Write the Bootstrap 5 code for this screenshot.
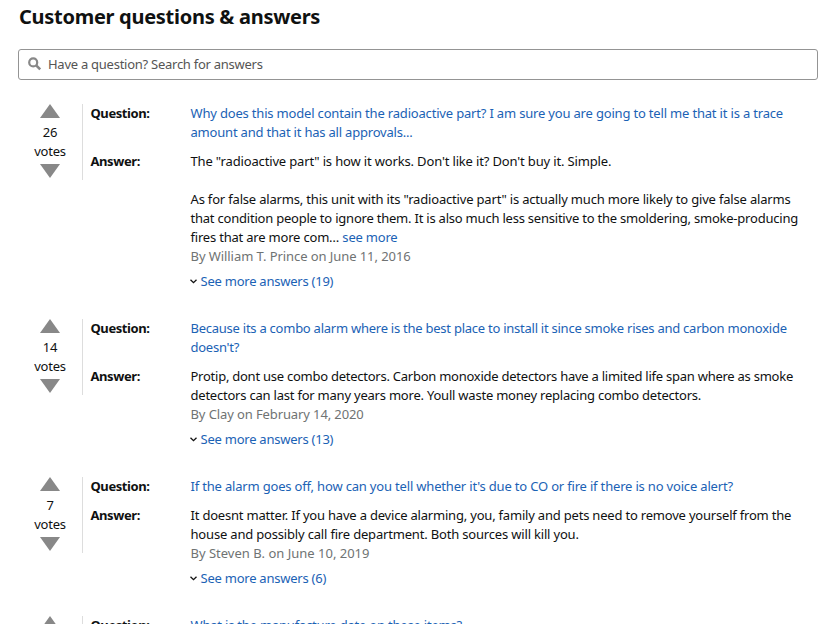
<!DOCTYPE html>
<html lang="en">
<head>
<meta charset="utf-8">
<meta name="viewport" content="width=device-width, initial-scale=1">
<title>Customer questions &amp; answers</title>
<link rel="stylesheet" href="https://cdn.jsdelivr.net/npm/bootstrap@5.3.0/dist/css/bootstrap.min.css">
<style>
html, body { overflow: hidden; }
body { height: 624px; font: 13px/19px "Noto Sans", "Open Sans", sans-serif; letter-spacing: -.2px; color: #0f1111; background: #fff; }
.qa-page { padding: 3px 20px 0 18px; }
.qa-title { font-size: 20px; line-height: 27px; font-weight: 700; margin: 0 0 19px; padding-left: 1px; letter-spacing: -.28px; }
.qa-search { height: 31px; border: 1px solid #949494; border-radius: 3px; padding: 0 9px; margin-bottom: 24px; }
.qa-search input { font-size: 13px; line-height: 19px; color: #555; letter-spacing: -.26px; }
.qa-search input::placeholder { color: #555; opacity: 1; }
.qa-search svg { margin: -2px 6px 0 0; }
.qa-item { margin-bottom: 28px; }
.vote-box { width: 65px; height: 76px; border-right: 1px solid #ddd; }
.vote-box svg { display: block; }
.vote-box .up { margin-bottom: 5px; }
.vote-box .down { margin-top: 3px; }
.qa-label { width: 100px; font-weight: 700; letter-spacing: -.42px; }
.qa-body { padding-left: 7.5px; }
.qa-question { margin-bottom: 10px; }
.qa-more { margin-top: 6px; letter-spacing: -.24px; }
.qa-more svg { margin: 0 4px 0 -1px; }
.qa-text { white-space: nowrap; }
.qa-page a { color: #1b62b5; }
.qa-by { color: #6f7373; letter-spacing: -.07px; }
.track-0 { letter-spacing: 0; }
.track-1 { letter-spacing: -.11px; }
.track-2 { letter-spacing: -.155px; }
.track-3 { letter-spacing: -.18px; }
.track-4 { letter-spacing: -.218px; }
.track-5 { letter-spacing: -.25px; }
</style>
</head>
<body>
<main class="qa-page">
  <h2 class="qa-title">Customer questions &amp; answers</h2>
  <div class="qa-search d-flex align-items-center">
    <svg class="flex-shrink-0" width="14" height="14" viewBox="0 0 14 14" fill="none" stroke="#888"><circle cx="5.2" cy="5.4" r="4" stroke-width="2.2"/><path d="M8.2 8.4l4 4" stroke-width="2.6"/></svg>
    <input class="border-0 p-0 flex-grow-1 bg-transparent" type="text" placeholder="Have a question? Search for answers" aria-label="Search">
  </div>

  <section class="qa-item d-flex align-items-start">
    <div class="vote-box d-flex flex-column align-items-center flex-shrink-0">
      <svg class="up" width="20" height="14"><path d="M10 0l10 14H0z" fill="#888"/></svg>
      <span>26</span><span>votes</span>
      <svg class="down" width="20" height="14"><path d="M0 0h20L10 14z" fill="#888"/></svg>
    </div>
    <div class="qa-body">
      <div class="qa-question d-flex"><div class="qa-label flex-shrink-0">Question:</div>
        <a class="qa-text text-decoration-none" href="#"><span class="track-3">Why does this model contain the radioactive part? I am sure you are going to tell me that it is a trace</span><br>amount and that it has all approvals...</a></div>
      <div class="d-flex"><div class="qa-label flex-shrink-0">Answer:</div>
        <div class="qa-text"><span class="track-2">The "radioactive part" is how it works. Don't like it? Don't buy it. Simple.</span><br><br><span class="track-3">As for false alarms, this unit with its "radioactive part" is actually much more likely to give false alarms</span><br><span class="track-4">that condition people to ignore them. It is also much less sensitive to the smoldering, smoke-producing</span><br>fires that are more com… <a class="text-decoration-none" href="#">see more</a>
          <div class="qa-by">By William T. Prince on June 11, 2016</div>
          <div class="qa-more d-flex align-items-center"><svg width="7" height="5" fill="none" stroke="#111" stroke-width="1.3"><path d="M.5 .7l3 3 3-3"/></svg><a class="text-decoration-none" href="#">See more answers (19)</a></div>
        </div></div>
    </div>
  </section>

  <section class="qa-item d-flex align-items-start">
    <div class="vote-box d-flex flex-column align-items-center flex-shrink-0">
      <svg class="up" width="20" height="14"><path d="M10 0l10 14H0z" fill="#888"/></svg>
      <span>14</span><span>votes</span>
      <svg class="down" width="20" height="14"><path d="M0 0h20L10 14z" fill="#888"/></svg>
    </div>
    <div class="qa-body">
      <div class="qa-question d-flex"><div class="qa-label flex-shrink-0">Question:</div>
        <a class="qa-text text-decoration-none track-5" href="#">Because its a combo alarm where is the best place to install it since smoke rises and carbon monoxide<br>doesn't?</a></div>
      <div class="d-flex"><div class="qa-label flex-shrink-0">Answer:</div>
        <div class="qa-text"><span class="track-5">Protip, dont use combo detectors. Carbon monoxide detectors have a limited life span where as smoke</span><br><span class="track-4">detectors can last for many years more. Youll waste money replacing combo detectors.</span>
          <div class="qa-by track-1">By Clay on February 14, 2020</div>
          <div class="qa-more d-flex align-items-center"><svg width="7" height="5" fill="none" stroke="#111" stroke-width="1.3"><path d="M.5 .7l3 3 3-3"/></svg><a class="text-decoration-none" href="#">See more answers (13)</a></div>
        </div></div>
    </div>
  </section>

  <section class="qa-item d-flex align-items-start">
    <div class="vote-box d-flex flex-column align-items-center flex-shrink-0">
      <svg class="up" width="20" height="14"><path d="M10 0l10 14H0z" fill="#888"/></svg>
      <span>7</span><span>votes</span>
      <svg class="down" width="20" height="14"><path d="M0 0h20L10 14z" fill="#888"/></svg>
    </div>
    <div class="qa-body">
      <div class="qa-question d-flex"><div class="qa-label flex-shrink-0">Question:</div>
        <a class="qa-text text-decoration-none track-3" href="#">If the alarm goes off, how can you tell whether it's due to CO or fire if there is no voice alert?</a></div>
      <div class="d-flex"><div class="qa-label flex-shrink-0">Answer:</div>
        <div class="qa-text">It doesnt matter. If you have a device alarming, you, family and pets need to remove yourself from the<br><span class="track-3">house and possibly call fire department. Both sources will kill you.</span>
          <div class="qa-by track-0">By Steven B. on June 10, 2019</div>
          <div class="qa-more d-flex align-items-center"><svg width="7" height="5" fill="none" stroke="#111" stroke-width="1.3"><path d="M.5 .7l3 3 3-3"/></svg><a class="text-decoration-none" href="#">See more answers (6)</a></div>
        </div></div>
    </div>
  </section>

  <section class="d-flex align-items-start">
    <div class="vote-box d-flex flex-column align-items-center flex-shrink-0">
      <svg class="up" width="20" height="14"><path d="M10 0l10 14H0z" fill="#888"/></svg>
    </div>
    <div class="qa-body">
      <div class="d-flex"><div class="qa-label flex-shrink-0">Question:</div>
        <a class="qa-text text-decoration-none" href="#">What is the manufacture date on these items?</a></div>
    </div>
  </section>
</main>
<script src="https://cdn.jsdelivr.net/npm/bootstrap@5.3.0/dist/js/bootstrap.bundle.min.js"></script>
</body>
</html>
